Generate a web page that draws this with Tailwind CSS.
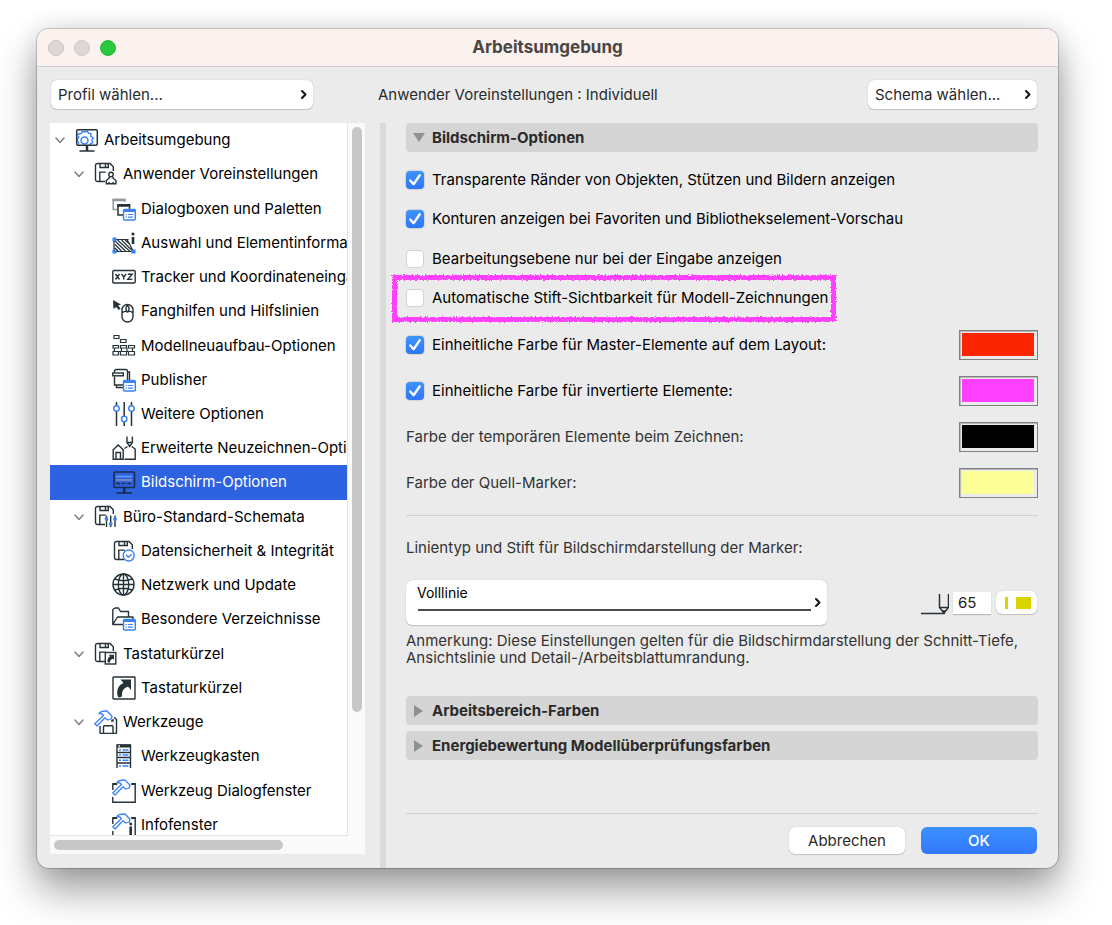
<!DOCTYPE html>
<html lang="de">
<head>
    <meta charset="UTF-8" />
    <meta name="viewport" content="width=device-width, initial-scale=1.0" />
    <title>Arbeitsumgebung</title>
    <script src="https://cdn.jsdelivr.net/npm/@tailwindcss/browser@4"></script>
</head>
<body class="bg-white font-['Inter','Liberation_Sans',sans-serif] text-[15px] leading-5 text-black">
    <!-- Shared icon parts -->
    <svg class="hidden" aria-hidden="true">
        <symbol id="chevron-down" viewBox="0 0 10 8"><path d="M1 2l4 4.500 4-4.500" fill="none" stroke="#808080" stroke-width="1.500" stroke-linecap="round" stroke-linejoin="round" /></symbol>
        <symbol id="chevron-right" viewBox="0 0 8 10"><path d="M2 1.500L5.500 5 2 8.500" fill="none" stroke="#111" stroke-width="2" stroke-linecap="round" stroke-linejoin="round" /></symbol>
        <symbol id="floppy" viewBox="0 0 24 24"><path d="M11 19.500H3.500a2 2 0 0 1-2-2v-14a2 2 0 0 1 2-2H16l3.300 3.300V9M6 1.500v4h8.300v-4M11.500 1.500v4M5.800 19.500v-9.400h6" fill="none" stroke="#253238" stroke-width="1.400" /></symbol>
        <symbol id="panel" viewBox="0 0 24 24"><rect x="11.500" y="12.500" width="11.800" height="10.500" rx="1" fill="#fff" stroke="#3b82f6" stroke-width="1.400" /><path d="M11.500 14h11.800" stroke="#3b82f6" stroke-width="2" /><path d="M13.500 17.500h1.200m1.200 0h5M13.500 20.200h1.200m1.200 0h5" stroke="#3b82f6" stroke-width="1.200" /></symbol>
        <symbol id="hammer" viewBox="0 0 24 24"><path d="M5 3.300C6.500 1.200 8 .8 13 1l5 5.300-.8 2.700-3.500 1-2.700-2.300L3 16l-2.200-2.200L9.500 5.500 8 4z" fill="#fff" stroke="#3b82f6" stroke-width="1.300" stroke-linejoin="round" /></symbol>
        <symbol id="tick" viewBox="0 0 19 19"><path d="M4.500 10l3.500 4 6.500-9.500" fill="none" stroke="#fff" stroke-width="2.400" stroke-linecap="round" stroke-linejoin="round" /></symbol>
        <filter id="chalk" x="-5%" y="-20%" width="110%" height="140%"><feTurbulence type="fractalNoise" baseFrequency="0.6" numOctaves="2" seed="4" /><feDisplacementMap in="SourceGraphic" scale="4" xChannelSelector="R" yChannelSelector="G" /></filter>
    </svg>

    <div class="flex min-h-screen pt-[29px] pr-[54px] pb-[57px] pl-[37px]">
        <main class="flex flex-1 flex-col overflow-hidden rounded-xl bg-[#ebebeb] shadow-[0_0_0_1px_rgba(0,0,0,0.18),0_22px_40px_rgba(0,0,0,0.38),0_0_24px_rgba(0,0,0,0.12)]">
            <!-- Title bar -->
            <header class="grid h-[38px] shrink-0 grid-cols-[1fr_auto_1fr] items-center border-b border-[#cfd1d1] bg-[#fbf1ef] px-[11px]">
                <div class="flex gap-[10px]">
                    <button aria-label="Schließen" class="size-4 rounded-full border border-[#cfc6c4] bg-[#dfd7d5]"></button>
                    <button aria-label="Minimieren" class="size-4 rounded-full border border-[#cfc6c4] bg-[#dfd7d5]"></button>
                    <button aria-label="Zoomen" class="size-4 rounded-full border border-[#25b637] bg-[#28c840]"></button>
                </div>
                <h1 class="pb-px text-[17px] font-bold text-[#4a4544]">Arbeitsumgebung</h1>
            </header>

            <!-- Profile and scheme -->
            <div class="flex items-center pt-[13px] pr-[21px] pb-[14px] pl-[14px] text-[#2a2a2a]">
                <div class="relative">
                    <select aria-label="Profil" class="h-[29px] w-[262px] appearance-none rounded-md bg-white px-[7px] shadow-[0_0_1px_0_rgba(0,0,0,0.3),0_1px_1px_rgba(0,0,0,0.15)]"><option>Profil wählen...</option></select>
                    <svg class="pointer-events-none absolute top-[9px] right-[5px] h-[11px] w-2"><use href="#chevron-right" /></svg>
                </div>
                <p class="ml-[65px] flex-1">Anwender Voreinstellungen : Individuell</p>
                <div class="relative">
                    <select aria-label="Schema" class="h-[29px] w-[169px] appearance-none rounded-md bg-white px-[7px] shadow-[0_0_1px_0_rgba(0,0,0,0.3),0_1px_1px_rgba(0,0,0,0.15)]"><option>Schema wählen...</option></select>
                    <svg class="pointer-events-none absolute top-[9px] right-[5px] h-[11px] w-2"><use href="#chevron-right" /></svg>
                </div>
            </div>

            <div class="flex flex-1">
                <!-- Navigation tree -->
                <div class="mb-[14px] ml-[13px] grid w-[315px] shrink-0 grid-cols-[298px_1fr] grid-rows-[713px_1fr] bg-[#fafafa]">
                    <nav class="overflow-hidden border-r border-b border-[#e4e4e4] bg-white">
                        <ul class="grid h-[719px] auto-rows-fr whitespace-nowrap">
                            <li class="flex items-center gap-[5px] pl-[5px]">
                                <svg class="mr-[5px] h-2 w-[10px] shrink-0"><use href="#chevron-down" /></svg>
                                <svg class="size-6 shrink-0" viewBox="0 0 24 24" fill="none" stroke="#253238" stroke-width="1.500">
                                    <path d="M2.500 6h2l2-.8.8-1.900 2.500.7 2.400-.9 1.300 2.100 2.500.6-.2 2.500 2.500 1.700-1.400 2.200.8 2.500-2.400 1.100-.6 1.500" stroke="#3b82f6" stroke-width="1.400" />
                                    <path d="M2.500 7.500l1.500 1-1 2.500-1 1 1.500 2 .5 2.500" stroke="#3b82f6" stroke-width="1.200" />
                                    <circle cx="9.500" cy="12.500" r="3.500" stroke="#3b82f6" />
                                    <rect x="1.700" y="1.700" width="20.600" height="15.600" rx="1.200" />
                                    <path d="M12 17.500V23" stroke-width="2.500" /><path d="M4.500 23h15" />
                                </svg>
                                Arbeitsumgebung
                            </li>
                            <li class="flex items-center gap-[5px] pl-6">
                                <svg class="mr-[5px] h-2 w-[10px] shrink-0"><use href="#chevron-down" /></svg>
                                <svg class="size-6 shrink-0" viewBox="0 0 24 24" fill="none" stroke="#253238" stroke-width="1.400">
                                    <use href="#floppy" />
                                    <circle cx="17" cy="12.500" r="2.200" /><path d="M15.300 14.500v1.500l-3 2.500v3.200h9.600v-3.200l-3-2.500v-1.500M15 22v-2m4 2v-2" />
                                </svg>
                                Anwender Voreinstellungen
                            </li>
                            <li class="flex items-center gap-[5px] pl-[62px]">
                                <svg class="size-6 shrink-0" viewBox="0 0 24 24" fill="none" stroke="#253238" stroke-width="1.500">
                                    <path d="M5 12.500H1.200V2.500h11.500V5" stroke="#90999c" /><path d="M.5 3h13" stroke="#90999c" stroke-width="2.500" />
                                    <path d="M11 18H6V8h11.500v4" /><path d="M5.300 8.300h13" stroke-width="2.800" />
                                    <use href="#panel" />
                                </svg>
                                Dialogboxen und Paletten
                            </li>
                            <li class="flex items-center gap-[5px] pl-[62px]">
                                <svg class="size-6 shrink-0" viewBox="0 0 24 24" fill="none" stroke="#253238" stroke-width="1.200">
                                    <path d="M2 8.500h14.500M2 8.500v12h19.500l-6.500-12M3 10l10.500 10M3 13.500l6.500 6.500M3 17l3 3M5.500 9l12 11M9.500 9l11 11M13 9l5 4.500" />
                                    <path d="M.5 6.500h4v4h-4zM.5 18.500h4v4h-4zM19.500 18.500h4v4h-4z" fill="#3b82f6" stroke="none" />
                                    <path d="M21 6v7" stroke-width="2.600" /><circle cx="21" cy="3" r="1" fill="#253238" />
                                </svg>
                                Auswahl und Elementinformationen
                            </li>
                            <li class="flex items-center gap-[5px] pl-[62px]">
                                <svg class="size-6 shrink-0" viewBox="0 0 24 24" fill="none" stroke="#253238" stroke-width="1.400">
                                    <rect x=".8" y="5.500" width="22.400" height="12.500" rx="1.200" />
                                    <path d="M3.500 9l4 5.500m0-5.500l-4 5.500M9.500 9l2.300 3m2.300-3l-2.300 3v2.500M15.800 9.200h4.400l-4.400 5.200h4.600" />
                                </svg>
                                Tracker und Koordinateneingabe
                            </li>
                            <li class="flex items-center gap-[5px] pl-[62px]">
                                <svg class="size-6 shrink-0" viewBox="0 0 24 24" fill="none" stroke="#253238" stroke-width="1.400">
                                    <path d="M1 1l8 4.500-2.800 1 2.300 3-1.900 1.400-2.300-3L1.500 10z" fill="#253238" stroke="none" />
                                    <rect x="10" y="5.500" width="11" height="17.500" rx="5.500" /><path d="M10 13.500c3-1.500 8-1.500 11 0M15.500 5.500v2" /><ellipse cx="15.500" cy="10" rx="1.500" ry="3" />
                                </svg>
                                Fanghilfen und Hilfslinien
                            </li>
                            <li class="flex items-center gap-[5px] pl-[62px]">
                                <svg class="size-6 shrink-0" viewBox="0 0 24 24" fill="none" stroke="#253238" stroke-width="1.200">
                                    <path d="M2 1.500h5v3H2zM8.500 5.500H14v3H8.500z" />
                                    <path d="M1 11.500h5.500v2.500H1zM8.500 11.500h6v2.500h-6zM16.500 11.500h6v2.500h-6zM2.500 14v3.500m7-3.500v3.500m5.500-3.500v3.500m5.500-3.500v3.500M.5 17.500h22.500M1 17.500v3.500h5.500v-3.500m2 0v3.500h6v-3.500m2 0v3.500h6v-3.500" />
                                </svg>
                                Modellneuaufbau-Optionen
                            </li>
                            <li class="flex items-center gap-[5px] pl-[62px]">
                                <svg class="size-6 shrink-0" viewBox="0 0 24 24" fill="none" stroke="#253238" stroke-width="1.400">
                                    <path d="M2.500 8.500V17h10M2.500 4.500V3.500a2 2 0 0 1 2-2h9a2 2 0 0 1 2 2V12M4.500 17v2.500h7M15.500 4h2v8" /><rect x=".8" y="5" width="10.500" height="2.800" fill="#fff" />
                                    <use href="#panel" />
                                </svg>
                                Publisher
                            </li>
                            <li class="flex items-center gap-[5px] pl-[62px]">
                                <svg class="size-6 shrink-0" viewBox="0 0 24 24" fill="none" stroke="#253238" stroke-width="1.500">
                                    <path d="M4.500 0v24M12.200 0v24M19.500 0v24" />
                                    <g fill="#fff" stroke="#3b82f6"><circle cx="4.500" cy="6.500" r="2.700" /><circle cx="12.200" cy="17" r="2.700" /><circle cx="19.500" cy="6.500" r="2.700" /></g>
                                </svg>
                                Weitere Optionen
                            </li>
                            <li class="flex items-center gap-[5px] pl-[62px]">
                                <svg class="size-6 shrink-0" viewBox="0 0 24 24" fill="none" stroke="#253238" stroke-width="1.400">
                                    <path d="M.5 14.500l5.700-5.500 5.800 5.500M1.200 14v9.200h10V14M4 23v-6.500h4.500V23M12.500 23.200h10.700V13l-3.500-2.500M12.500 12.500l3-2" />
                                    <path d="M15 .5v6l2.700 4 2.700-4v-6M15 6.500h5.400" />
                                </svg>
                                Erweiterte Neuzeichnen-Optionen
                            </li>
                            <li class="flex items-center gap-[5px] bg-[#2d63e0] pl-[62px] text-white">
                                <svg class="size-6 shrink-0" viewBox="0 0 24 24" fill="none" stroke="#1c2c4d" stroke-width="1.600">
                                    <rect x="2" y="2" width="20.500" height="15.500" rx="1" /><path d="M4 6.500h16" stroke="#5f9bff" /><path d="M4 10h16" stroke="#9098a8" stroke-width="1.400" /><path d="M4 13.500h4m1.500 0h4m1.500 0h4" stroke-width="1.400" />
                                    <path d="M12.200 17.500V23" stroke-width="2.500" /><path d="M4.500 23h15.500" />
                                </svg>
                                Bildschirm-Optionen
                            </li>
                            <li class="flex items-center gap-[5px] pl-6">
                                <svg class="mr-[5px] h-2 w-[10px] shrink-0"><use href="#chevron-down" /></svg>
                                <svg class="size-6 shrink-0" viewBox="0 0 24 24" fill="none" stroke="#253238" stroke-width="1.400">
                                    <use href="#floppy" /><path d="M12.500 10.500v11.500M16.700 10.500v11.500M21 10.500v11.500" />
                                    <g fill="#3b82f6" stroke="none"><circle cx="12.500" cy="14" r="1.900" /><circle cx="16.700" cy="18.800" r="1.900" /><circle cx="21" cy="14" r="1.900" /></g>
                                </svg>
                                Büro-Standard-Schemata
                            </li>
                            <li class="flex items-center gap-[5px] pl-[62px]">
                                <svg class="size-6 shrink-0" viewBox="0 0 24 24" fill="none" stroke="#3b82f6" stroke-width="1.400">
                                    <use href="#floppy" x="1" y="1" /><circle cx="16.700" cy="16.500" r="5.500" fill="#fff" /><path d="M13.800 15.800l2.500 2.200 3.500-2.700" />
                                </svg>
                                Datensicherheit &amp; Integrität
                            </li>
                            <li class="flex items-center gap-[5px] pl-[62px]">
                                <svg class="size-6 shrink-0" viewBox="0 0 24 24" fill="none" stroke="#253238" stroke-width="1.400">
                                    <circle cx="11.500" cy="11.500" r="10.500" /><ellipse cx="11.500" cy="11.500" rx="5.200" ry="10.500" /><path d="M11.500 1v21M1 11.500h21M3 6c5 2 12 2 17 0M3 17c5-2 12-2 17 0" />
                                </svg>
                                Netzwerk und Update
                            </li>
                            <li class="flex items-center gap-[5px] pl-[62px]">
                                <svg class="size-6 shrink-0" viewBox="0 0 24 24" fill="none" stroke="#253238" stroke-width="1.400">
                                    <path d="M11 17.500H.8V2.500L3 1h3.500l2 3.500h8V10M.8 17.500L5.500 10h15.500v2" stroke-linejoin="round" />
                                    <use href="#panel" />
                                </svg>
                                Besondere Verzeichnisse
                            </li>
                            <li class="flex items-center gap-[5px] pl-6">
                                <svg class="mr-[5px] h-2 w-[10px] shrink-0"><use href="#chevron-down" /></svg>
                                <svg class="size-6 shrink-0" viewBox="0 0 24 24" fill="none" stroke="#253238" stroke-width="1.400">
                                    <use href="#floppy" /><rect x="11.300" y="10.500" width="10.500" height="11.500" fill="#fff" />
                                    <path d="M13.500 20.500c-.3-3.500.5-5 2.500-6l-1-1.800h5v5l-1.500-1c-1.800.8-2.200 1.800-2.500 3.800z" fill="#253238" stroke="none" />
                                </svg>
                                Tastaturkürzel
                            </li>
                            <li class="flex items-center gap-[5px] pl-[62px]">
                                <svg class="size-6 shrink-0" viewBox="0 0 24 24" fill="none" stroke="#253238" stroke-width="1.400">
                                    <rect x="1" y="1" width="22" height="22" rx=".5" />
                                    <path d="M6 21C4 15 6 9 11.500 7L8.500 3.500H19V14l-3-3.500C11.500 12 9.500 15.500 10 20c-1 1.500-3 1.800-4 1z" fill="#253238" stroke="none" />
                                </svg>
                                Tastaturkürzel
                            </li>
                            <li class="flex items-center gap-[5px] pl-6">
                                <svg class="mr-[5px] h-2 w-[10px] shrink-0"><use href="#chevron-down" /></svg>
                                <svg class="size-6 shrink-0" viewBox="0 0 24 24" fill="none" stroke="#253238" stroke-width="1.400">
                                    <path d="M6 16v6.500a1 1 0 0 0 1 1h14.500a1 1 0 0 0 1-1V9.500L20 7.200M9.500 23.500v-6.800a1 1 0 0 1 1-1h7.500a1 1 0 0 1 1 1v6.800M19 9v2h-2" />
                                    <use href="#hammer" />
                                </svg>
                                Werkzeuge
                            </li>
                            <li class="flex items-center gap-[5px] pl-[62px]">
                                <svg class="size-6 shrink-0" viewBox="0 0 24 24" fill="none" stroke="#253238" stroke-width="1.400">
                                    <path d="M5 24V1h13.500v23M5 8.500h13.500M5 13.500h13.500M5 19h13.500" /><path d="M5 2h13.500" stroke-width="3" /><path d="M6.500 2h1.500" stroke="#fff" />
                                    <path d="M7 6h2m1.500 0h6M7 11h2m1.500 0h6M7 16.300h2m1.500 0h6M7 22h2m1.500 0h6" stroke="#3b82f6" />
                                </svg>
                                Werkzeugkasten
                            </li>
                            <li class="flex items-center gap-[5px] pl-[62px]">
                                <svg class="size-6 shrink-0" viewBox="0 0 24 24" fill="none" stroke="#253238" stroke-width="1.400">
                                    <path d="M.8 11V5h4M.8 18v5.200h22.400V5h-4" />
                                    <path d="M.8 5h4.500M19.500 5h4" stroke-width="2" />
                                    <use href="#hammer" />
                                </svg>
                                Werkzeug Dialogfenster
                            </li>
                            <li class="flex items-center gap-[5px] pl-[62px]">
                                <svg class="size-6 shrink-0" viewBox="0 0 24 24" fill="none" stroke="#253238" stroke-width="1.400">
                                    <path d="M.8 11V5h4M.8 18v5.200h22.400V5h-4" />
                                    <path d="M.8 5h4.500M19.500 5h4" stroke-width="2" />
                                    <use href="#hammer" /><path d="M18.700 13.500V24" stroke-width="2.600" /><circle cx="18.700" cy="11" r="1.400" fill="#253238" stroke="none" />
                                </svg>
                                Infofenster
                            </li>
                        </ul>
                    </nav>
                    <div class="px-1 py-1"><div class="h-[585px] w-[10px] rounded-full bg-[#c7c7c7]"></div></div>
                    <div class="px-1 py-1"><div class="h-[10px] w-[229px] rounded-full bg-[#c7c7c7]"></div></div>
                </div>

                <div class="ml-[15px] w-[6px] shrink-0 bg-[#dadada]"></div>

                <!-- Display options -->
                <section class="flex flex-1 flex-col pr-5 pb-[14px] pl-5">
                    <button class="flex h-[29px] items-center gap-[7px] rounded bg-[#d5d5d5] px-[7px] text-left font-bold text-[#2a2a2a]">
                        <svg class="h-[10px] w-3" viewBox="0 0 12 10"><path d="M0 0h12L6 9z" fill="#8b9294" /></svg>
                        Bildschirm-Optionen
                    </button>

                    <div class="mt-2 grid h-[158px] auto-rows-fr justify-items-start">
                        <label class="flex items-center gap-2">
                            <span class="grid size-[18px]"><input type="checkbox" checked class="peer col-start-1 row-start-1 size-[18px] appearance-none rounded bg-white shadow-[0_0_1px_1px_rgba(0,0,0,0.1)] checked:bg-linear-to-b checked:from-[#3f92fb] checked:to-[#2f76fb]" /><svg class="pointer-events-none invisible col-start-1 row-start-1 size-[18px] peer-checked:visible"><use href="#tick" /></svg></span>
                            Transparente Ränder von Objekten, Stützen und Bildern anzeigen
                        </label>
                        <label class="flex items-center gap-2">
                            <span class="grid size-[18px]"><input type="checkbox" checked class="peer col-start-1 row-start-1 size-[18px] appearance-none rounded bg-white shadow-[0_0_1px_1px_rgba(0,0,0,0.1)] checked:bg-linear-to-b checked:from-[#3f92fb] checked:to-[#2f76fb]" /><svg class="pointer-events-none invisible col-start-1 row-start-1 size-[18px] peer-checked:visible"><use href="#tick" /></svg></span>
                            Konturen anzeigen bei Favoriten und Bibliothekselement-Vorschau
                        </label>
                        <label class="flex items-center gap-2">
                            <input type="checkbox" class="size-[18px] appearance-none rounded border border-[#d2d2d2] bg-white checked:bg-[#2f76fb]" />
                            Bearbeitungsebene nur bei der Eingabe anzeigen
                        </label>
                        <label class="relative flex items-center gap-2">
                            <input type="checkbox" class="size-[18px] appearance-none rounded border border-[#d2d2d2] bg-white checked:bg-[#2f76fb]" />
                            Automatische Stift-Sichtbarkeit für Modell-Zeichnungen
                            <!-- hand-drawn marker frame -->
                            <span class="pointer-events-none absolute -top-1 -right-2 -bottom-1 -left-[14px] border-5 border-[#ff40ff] [filter:url(#chalk)]"></span>
                        </label>
                    </div>

                    <div class="mt-3 flex flex-col gap-4">
                        <div class="flex h-[30px] items-center justify-between">
                            <label class="flex items-center gap-2">
                                <span class="grid size-[18px]"><input type="checkbox" checked class="peer col-start-1 row-start-1 size-[18px] appearance-none rounded bg-white shadow-[0_0_1px_1px_rgba(0,0,0,0.1)] checked:bg-linear-to-b checked:from-[#3f92fb] checked:to-[#2f76fb]" /><svg class="pointer-events-none invisible col-start-1 row-start-1 size-[18px] peer-checked:visible"><use href="#tick" /></svg></span>
                                Einheitliche Farbe für Master-Elemente auf dem Layout:
                            </label>
                            <button aria-label="Farbe Master-Elemente" class="h-[30px] w-[79px] border border-[#808080] bg-[#fb2500] shadow-[inset_1px_1px_0_#b8b8b8,inset_0_0_0_2px_#ebebeb,inset_0_-3px_0_#ebebeb,inset_-3px_0_0_#ebebeb]"></button>
                        </div>
                        <div class="flex h-[30px] items-center justify-between">
                            <label class="flex items-center gap-2">
                                <span class="grid size-[18px]"><input type="checkbox" checked class="peer col-start-1 row-start-1 size-[18px] appearance-none rounded bg-white shadow-[0_0_1px_1px_rgba(0,0,0,0.1)] checked:bg-linear-to-b checked:from-[#3f92fb] checked:to-[#2f76fb]" /><svg class="pointer-events-none invisible col-start-1 row-start-1 size-[18px] peer-checked:visible"><use href="#tick" /></svg></span>
                                Einheitliche Farbe für invertierte Elemente:
                            </label>
                            <button aria-label="Farbe invertierte Elemente" class="h-[30px] w-[79px] border border-[#808080] bg-[#ff40ff] shadow-[inset_1px_1px_0_#b8b8b8,inset_0_0_0_2px_#ebebeb,inset_0_-3px_0_#ebebeb,inset_-3px_0_0_#ebebeb]"></button>
                        </div>
                        <div class="flex h-[30px] items-center justify-between">
                            <span class="text-[#333]">Farbe der temporären Elemente beim Zeichnen:</span>
                            <button aria-label="Farbe temporäre Elemente" class="h-[30px] w-[79px] border border-[#808080] bg-black shadow-[inset_1px_1px_0_#b8b8b8,inset_0_0_0_2px_#ebebeb,inset_0_-3px_0_#ebebeb,inset_-3px_0_0_#ebebeb]"></button>
                        </div>
                        <div class="flex h-[30px] items-center justify-between">
                            <span class="text-[#333]">Farbe der Quell-Marker:</span>
                            <button aria-label="Farbe Quell-Marker" class="h-[30px] w-[79px] border border-[#808080] bg-[#fcff96] shadow-[inset_1px_1px_0_#b8b8b8,inset_0_0_0_2px_#ebebeb,inset_0_-3px_0_#ebebeb,inset_-3px_0_0_#ebebeb]"></button>
                        </div>
                    </div>

                    <hr class="mt-[17px] border-[#d2d2d2]" />

                    <label for="line-type" class="mt-[22px] text-[#333]">Linientyp und Stift für Bildschirmdarstellung der Marker:</label>
                    <div class="mt-[22px] flex items-center justify-between">
                        <div class="relative w-[421px]">
                            <select id="line-type" class="block h-[45px] w-full appearance-none rounded-md bg-white px-[11px] pb-5 text-sm shadow-[0_0_1px_0_rgba(0,0,0,0.3),0_1px_1px_rgba(0,0,0,0.15)]"><option>Volllinie</option></select>
                            <span class="pointer-events-none absolute right-4 bottom-[14px] left-3 h-[2px] bg-[#4a4a4a]"></span>
                            <svg class="pointer-events-none absolute right-[5px] bottom-[17px] h-[11px] w-2"><use href="#chevron-right" /></svg>
                        </div>
                        <div class="flex items-center pr-px">
                            <svg class="mr-1 h-6 w-7" viewBox="0 0 28 24" fill="none" stroke="#253238" stroke-width="1.500"><path d="M0 22.500h24M18.500 3v13.500L23 22l4.500-5.500V3M18.500 16.500h9M21.500 20h3" /></svg>
                            <input type="text" value="65" aria-label="Stift" class="h-[22px] w-[38px] bg-white px-[5px] text-[#222] shadow-[0_1px_1px_rgba(0,0,0,0.2)]" />
                            <button aria-label="Stiftfarbe" class="ml-[5px] flex h-[23px] w-[41px] items-center justify-between rounded-md bg-white pr-[6px] pl-[9px] shadow-[0_0_1px_0_rgba(0,0,0,0.3),0_1px_1px_rgba(0,0,0,0.15)]"><span class="h-3 w-[3px] bg-[#d8d400]"></span><span class="h-3 w-[15px] bg-[#d8d400]"></span></button>
                        </div>
                    </div>
                    <p class="mt-[7px] leading-[17px] text-[#333]">Anmerkung: Diese Einstellungen gelten für die Bildschirmdarstellung der Schnitt-Tiefe, Ansichtslinie und Detail-/Arbeitsblattumrandung.</p>

                    <button class="mt-[30px] flex h-[29px] items-center gap-[9px] rounded bg-[#d5d5d5] px-2 text-left font-bold text-[#2a2a2a]">
                        <svg class="h-3 w-[9px]" viewBox="0 0 9 12"><path d="M0 0v12l9-6z" fill="#8b9294" /></svg>
                        Arbeitsbereich-Farben
                    </button>
                    <button class="mt-[6px] flex h-[29px] items-center gap-[9px] rounded bg-[#d5d5d5] px-2 text-left font-bold text-[#2a2a2a]">
                        <svg class="h-3 w-[9px]" viewBox="0 0 9 12"><path d="M0 0v12l9-6z" fill="#8b9294" /></svg>
                        Energiebewertung Modellüberprüfungsfarben
                    </button>

                    <footer class="mt-auto flex justify-end gap-4 border-t border-[#cfcfcf] pt-[13px] pr-px">
                        <button class="h-[27px] w-[116px] rounded-md bg-white text-[#2a2a2a] shadow-[0_0_1px_0_rgba(0,0,0,0.3),0_1px_1px_rgba(0,0,0,0.15)]">Abbrechen</button>
                        <button class="h-[27px] w-[116px] rounded-md bg-linear-to-b from-[#3c90fd] to-[#3377fd] font-medium text-white">OK</button>
                    </footer>
                </section>
            </div>
        </main>
    </div>
</body>
</html>
